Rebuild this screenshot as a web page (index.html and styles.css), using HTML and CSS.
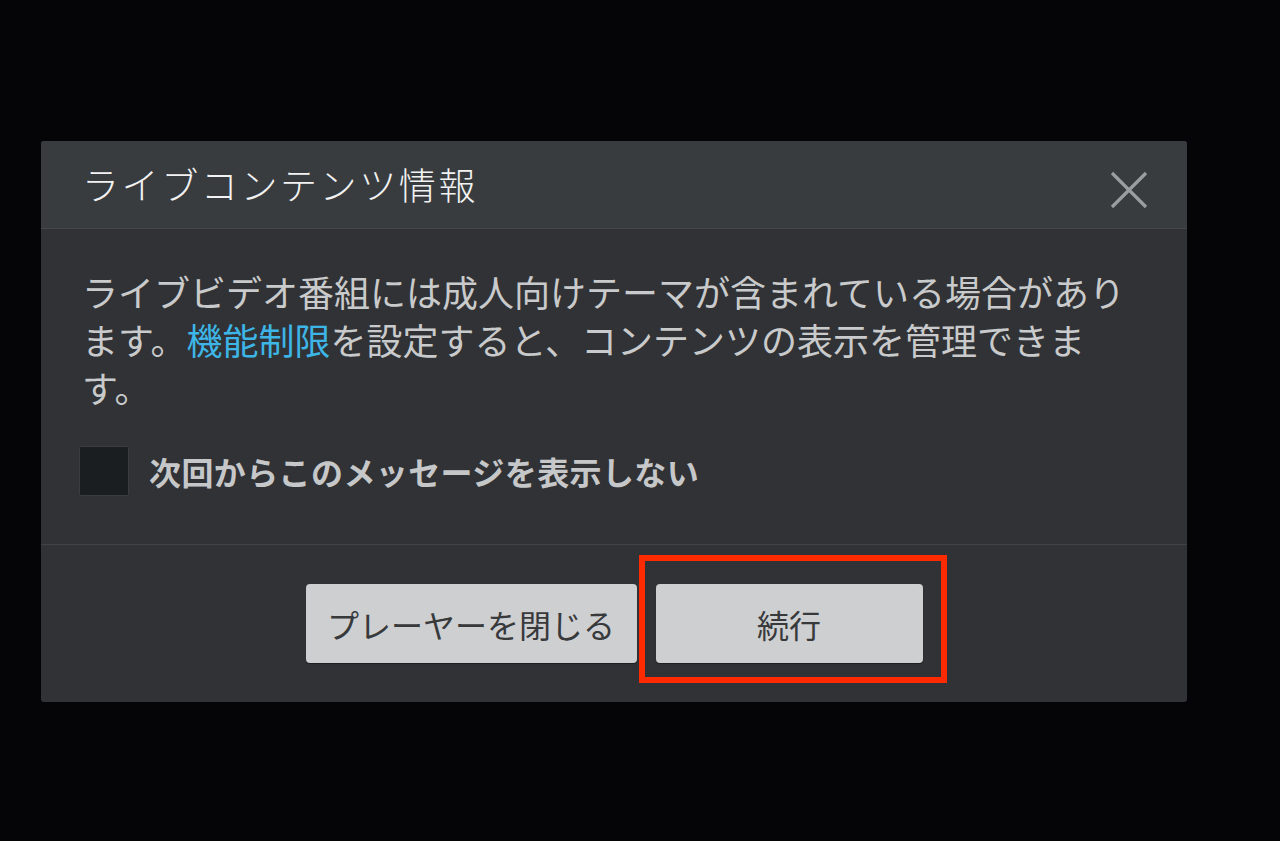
FILE: index.html
```html
<!DOCTYPE html>
<html lang="ja">
<head>
<meta charset="utf-8">
<title>ライブコンテンツ情報</title>
<link rel="stylesheet" href="styles.css">
</head>
<body>
<div class="stage">
  <div class="dialog">
    <div class="dialog-header">
      <h1 class="dialog-title">ライブコンテンツ情報</h1>
      <button class="close-btn" aria-label="閉じる">
        <svg width="38" height="38" viewBox="0 0 38 38"><path d="M2 2 L36 36 M36 2 L2 36" stroke="#9b9ea1" stroke-width="3.2" fill="none"/></svg>
      </button>
    </div>
    <div class="dialog-body">
      <p class="message">ライブビデオ番組には成人向けテーマが含まれている場合があります。<span class="link">機能制限</span>を設定すると、コンテンツの表示を管理できます。</p>
      <label class="check-row">
        <span class="checkbox"></span>
        <span class="check-label">次回からこのメッセージを表示しない</span>
      </label>
    </div>
    <div class="dialog-footer">
      <button class="btn btn-close">プレーヤーを閉じる</button>
      <div class="highlight-wrap">
        <button class="btn btn-continue">続行</button>
        <span class="highlight"></span>
      </div>
    </div>
  </div>
</div>
</body>
</html>
```
FILE: styles.css
```css
html, body {
  margin: 0;
  padding: 0;
  background: #050508;
  width: 1280px;
  height: 841px;
  overflow: hidden;
  font-family: "Noto Sans CJK JP", "Noto Sans", sans-serif;
}
.stage {
  padding: 141px 0 0 41px;
}
.dialog {
  width: 1146px;
  background: #303235;
  border-radius: 3px;
  overflow: hidden;
}
.dialog-header {
  height: 88px;
  background: #393c3f;
  border-bottom: 1px solid #45484b;
  display: flex;
  align-items: center;
  justify-content: space-between;
  padding: 0 39px 0 41px;
  box-sizing: border-box;
}
.dialog-title {
  margin: 0;
  font-weight: 300;
  font-size: 37px;
  letter-spacing: 2.6px;
  color: #f2f2f2;
  line-height: 1;
}
.close-btn {
  background: none;
  border: 0;
  padding: 0;
  width: 38px;
  height: 38px;
  margin-top: 10px;
  display: flex;
}
.dialog-body {
  padding: 38px 41px 48px 41px;
  border-bottom: 1px solid #404346;
}
.message {
  margin: 0;
  font-size: 36px;
  line-height: 48px;
  color: #c9cacb;
  width: 1064px;
}
.link {
  color: #3db5e6;
}
.check-row {
  display: flex;
  align-items: center;
  margin-top: 35px;
  gap: 20px;
}
.checkbox {
  width: 48px;
  height: 48px;
  background: #1b1e21;
  border: 1px solid #3a3d40;
  border-radius: 2px;
  margin-left: -3px;
}
.check-label {
  font-size: 32px;
  font-weight: 700;
  letter-spacing: 0.4px;
  color: #c6c7c8;
  line-height: 48px;
}
.dialog-footer {
  display: flex;
  justify-content: center;
  gap: 19px;
  padding: 39px 0 39px;
}
.btn {
  height: 79px;
  border: 0;
  border-radius: 4px;
  background: #cdcfd1;
  color: #38393b;
  font-family: "Noto Sans CJK JP", "Noto Sans", sans-serif;
  font-size: 32px;
  padding: 0;
  box-shadow: 0 1px 1px rgba(0,0,0,0.4);
}
.btn-close {
  width: 331px;
}
.btn-continue {
  width: 267px;
}
.highlight-wrap {
  position: relative;
  display: flex;
}
.highlight {
  position: absolute;
  left: -17px;
  top: -29px;
  right: -24px;
  bottom: -20px;
  border: 6px solid #ff2a00;
  pointer-events: none;
}
```
